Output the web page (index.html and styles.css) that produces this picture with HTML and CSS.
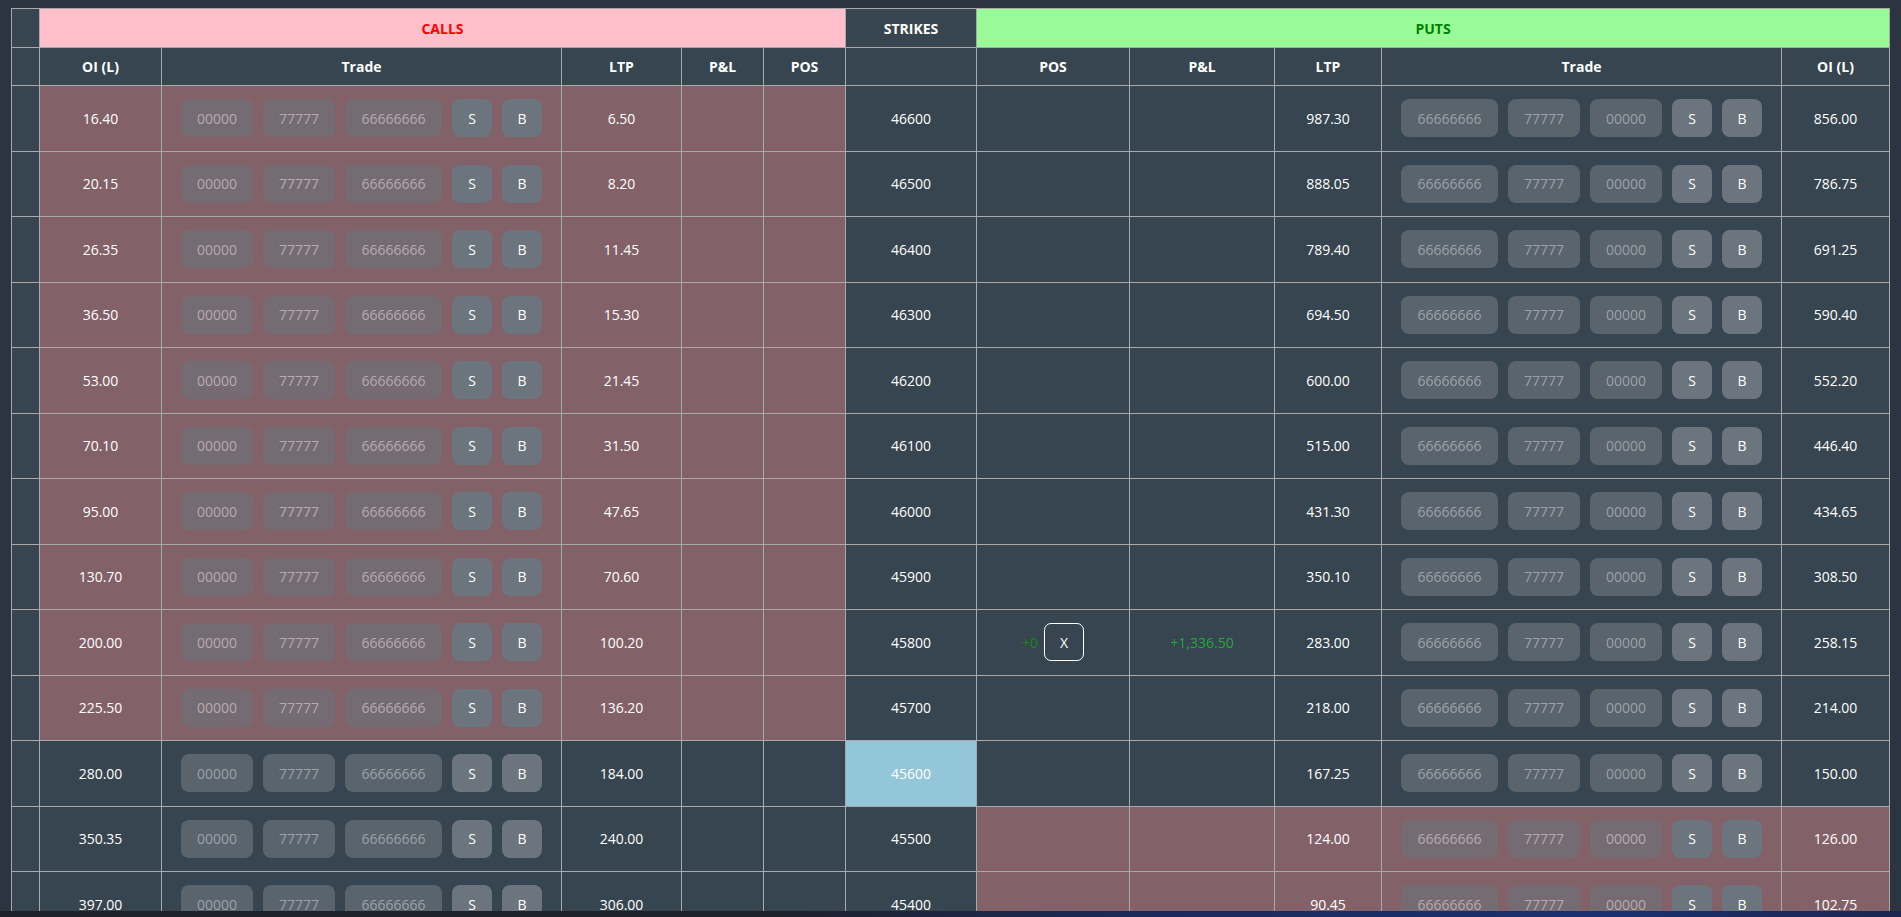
FILE: index.html
```html
<!DOCTYPE html>
<html lang="en">
<head>
<meta charset="utf-8">
<title>Option Chain</title>
<link rel="stylesheet" href="styles.css">
</head>
<body>
<div class="page">
<table class="chain">
<colgroup>
<col class="w-idx"><col class="w-oi"><col class="w-trade"><col class="w-ltp"><col class="w-pl"><col class="w-pos">
<col class="w-strike">
<col class="w-ppos"><col class="w-ppl"><col class="w-pltp"><col class="w-trade"><col class="w-poi">
</colgroup>
<thead>
<tr class="groups">
<th></th>
<th colspan="5" class="calls">CALLS</th>
<th>STRIKES</th>
<th colspan="5" class="puts">PUTS</th>
</tr>
<tr class="cols">
<th></th><th>OI (L)</th><th>Trade</th><th>LTP</th><th>P&amp;L</th><th>POS</th>
<th></th>
<th>POS</th><th>P&amp;L</th><th>LTP</th><th>Trade</th><th>OI (L)</th>
</tr>
</thead>
<tbody>
<tr>
<td></td><td class="itm">16.40</td><td class="itm"><div class="trade"><input placeholder="00000"><input placeholder="77777"><input class="wide" placeholder="66666666"><button>S</button><button>B</button></div></td><td class="itm">6.50</td><td class="itm"></td><td class="itm"></td>
<td>46600</td>
<td></td><td></td><td>987.30</td><td><div class="trade"><input class="wide" placeholder="66666666"><input placeholder="77777"><input placeholder="00000"><button>S</button><button>B</button></div></td><td>856.00</td>
</tr>
<tr>
<td></td><td class="itm">20.15</td><td class="itm"><div class="trade"><input placeholder="00000"><input placeholder="77777"><input class="wide" placeholder="66666666"><button>S</button><button>B</button></div></td><td class="itm">8.20</td><td class="itm"></td><td class="itm"></td>
<td>46500</td>
<td></td><td></td><td>888.05</td><td><div class="trade"><input class="wide" placeholder="66666666"><input placeholder="77777"><input placeholder="00000"><button>S</button><button>B</button></div></td><td>786.75</td>
</tr>
<tr>
<td></td><td class="itm">26.35</td><td class="itm"><div class="trade"><input placeholder="00000"><input placeholder="77777"><input class="wide" placeholder="66666666"><button>S</button><button>B</button></div></td><td class="itm">11.45</td><td class="itm"></td><td class="itm"></td>
<td>46400</td>
<td></td><td></td><td>789.40</td><td><div class="trade"><input class="wide" placeholder="66666666"><input placeholder="77777"><input placeholder="00000"><button>S</button><button>B</button></div></td><td>691.25</td>
</tr>
<tr>
<td></td><td class="itm">36.50</td><td class="itm"><div class="trade"><input placeholder="00000"><input placeholder="77777"><input class="wide" placeholder="66666666"><button>S</button><button>B</button></div></td><td class="itm">15.30</td><td class="itm"></td><td class="itm"></td>
<td>46300</td>
<td></td><td></td><td>694.50</td><td><div class="trade"><input class="wide" placeholder="66666666"><input placeholder="77777"><input placeholder="00000"><button>S</button><button>B</button></div></td><td>590.40</td>
</tr>
<tr>
<td></td><td class="itm">53.00</td><td class="itm"><div class="trade"><input placeholder="00000"><input placeholder="77777"><input class="wide" placeholder="66666666"><button>S</button><button>B</button></div></td><td class="itm">21.45</td><td class="itm"></td><td class="itm"></td>
<td>46200</td>
<td></td><td></td><td>600.00</td><td><div class="trade"><input class="wide" placeholder="66666666"><input placeholder="77777"><input placeholder="00000"><button>S</button><button>B</button></div></td><td>552.20</td>
</tr>
<tr>
<td></td><td class="itm">70.10</td><td class="itm"><div class="trade"><input placeholder="00000"><input placeholder="77777"><input class="wide" placeholder="66666666"><button>S</button><button>B</button></div></td><td class="itm">31.50</td><td class="itm"></td><td class="itm"></td>
<td>46100</td>
<td></td><td></td><td>515.00</td><td><div class="trade"><input class="wide" placeholder="66666666"><input placeholder="77777"><input placeholder="00000"><button>S</button><button>B</button></div></td><td>446.40</td>
</tr>
<tr>
<td></td><td class="itm">95.00</td><td class="itm"><div class="trade"><input placeholder="00000"><input placeholder="77777"><input class="wide" placeholder="66666666"><button>S</button><button>B</button></div></td><td class="itm">47.65</td><td class="itm"></td><td class="itm"></td>
<td>46000</td>
<td></td><td></td><td>431.30</td><td><div class="trade"><input class="wide" placeholder="66666666"><input placeholder="77777"><input placeholder="00000"><button>S</button><button>B</button></div></td><td>434.65</td>
</tr>
<tr>
<td></td><td class="itm">130.70</td><td class="itm"><div class="trade"><input placeholder="00000"><input placeholder="77777"><input class="wide" placeholder="66666666"><button>S</button><button>B</button></div></td><td class="itm">70.60</td><td class="itm"></td><td class="itm"></td>
<td>45900</td>
<td></td><td></td><td>350.10</td><td><div class="trade"><input class="wide" placeholder="66666666"><input placeholder="77777"><input placeholder="00000"><button>S</button><button>B</button></div></td><td>308.50</td>
</tr>
<tr>
<td></td><td class="itm">200.00</td><td class="itm"><div class="trade"><input placeholder="00000"><input placeholder="77777"><input class="wide" placeholder="66666666"><button>S</button><button>B</button></div></td><td class="itm">100.20</td><td class="itm"></td><td class="itm"></td>
<td>45800</td>
<td><div class="pos"><span class="pos-qty">+0</span><button class="close">X</button></div></td><td><span class="profit">+1,336.50</span></td><td>283.00</td><td><div class="trade"><input class="wide" placeholder="66666666"><input placeholder="77777"><input placeholder="00000"><button>S</button><button>B</button></div></td><td>258.15</td>
</tr>
<tr>
<td></td><td class="itm">225.50</td><td class="itm"><div class="trade"><input placeholder="00000"><input placeholder="77777"><input class="wide" placeholder="66666666"><button>S</button><button>B</button></div></td><td class="itm">136.20</td><td class="itm"></td><td class="itm"></td>
<td>45700</td>
<td></td><td></td><td>218.00</td><td><div class="trade"><input class="wide" placeholder="66666666"><input placeholder="77777"><input placeholder="00000"><button>S</button><button>B</button></div></td><td>214.00</td>
</tr>
<tr>
<td></td><td>280.00</td><td><div class="trade"><input placeholder="00000"><input placeholder="77777"><input class="wide" placeholder="66666666"><button>S</button><button>B</button></div></td><td>184.00</td><td></td><td></td>
<td class="atm">45600</td>
<td></td><td></td><td>167.25</td><td><div class="trade"><input class="wide" placeholder="66666666"><input placeholder="77777"><input placeholder="00000"><button>S</button><button>B</button></div></td><td>150.00</td>
</tr>
<tr>
<td></td><td>350.35</td><td><div class="trade"><input placeholder="00000"><input placeholder="77777"><input class="wide" placeholder="66666666"><button>S</button><button>B</button></div></td><td>240.00</td><td></td><td></td>
<td>45500</td>
<td class="itm"></td><td class="itm"></td><td class="itm">124.00</td><td class="itm"><div class="trade"><input class="wide" placeholder="66666666"><input placeholder="77777"><input placeholder="00000"><button>S</button><button>B</button></div></td><td class="itm">126.00</td>
</tr>
<tr>
<td></td><td>397.00</td><td><div class="trade"><input placeholder="00000"><input placeholder="77777"><input class="wide" placeholder="66666666"><button>S</button><button>B</button></div></td><td>306.00</td><td></td><td></td>
<td>45400</td>
<td class="itm"></td><td class="itm"></td><td class="itm">90.45</td><td class="itm"><div class="trade"><input class="wide" placeholder="66666666"><input placeholder="77777"><input placeholder="00000"><button>S</button><button>B</button></div></td><td class="itm">102.75</td>
</tr>
</tbody>
</table>
</div>
<div class="taskbar"></div>
</body>
</html>
```

FILE: styles.css
```css
html, body {
  margin: 0;
  background: #2b3440;
}
body {
  font-family: "Open Sans", "Noto Sans", sans-serif;
  font-size: 14px;
  color: #ffffff;
  overflow: hidden;
}
.page {
  padding: 8px 11px 0;
}
.chain {
  border-collapse: collapse;
  table-layout: fixed;
  width: 1879px;
}
.w-idx { width: 28px; }
.w-oi { width: 122px; }
.w-trade { width: 400px; }
.w-ltp { width: 120px; }
.w-pl { width: 82px; }
.w-pos { width: 82px; }
.w-strike { width: 131px; }
.w-ppos { width: 153px; }
.w-ppl { width: 145px; }
.w-pltp { width: 107px; }
.w-poi { width: 108px; }

.chain th,
.chain td {
  border: 1px solid #a9a9a9;
  background: #36454f;
  text-align: center;
  vertical-align: middle;
  padding: 0 2px;
}
.chain th {
  font-weight: bold;
  font-size: 14px;
}
.groups th {
  height: 38px;
}
.cols th {
  height: 37px;
}
.chain .calls {
  background: #ffc0cb;
  color: #ff0000;
}
.chain .puts {
  background: #98fb98;
  color: #008000;
}
.chain tbody td {
  padding-top: 13.25px;
  padding-bottom: 13.25px;
  height: 38px;
}
.chain td.itm {
  background: #836169;
}
.chain td.atm {
  background: #92c6d8;
}

.trade {
  display: flex;
  justify-content: center;
  gap: 10px;
}
.trade input {
  width: 72px;
  height: 38px;
  box-sizing: border-box;
  border: none;
  border-radius: 8px;
  background: #5a646d;
  color: #ffffff;
  font-family: inherit;
  font-size: 14px;
  text-align: center;
  padding: 0;
  outline: none;
}
.trade input.wide {
  width: 97px;
}
.trade input::placeholder {
  color: #9aa1a8;
}
.itm .trade input {
  background: #756c73;
}
.itm .trade input::placeholder {
  color: #b7a9ae;
}
.trade button {
  width: 40px;
  height: 38px;
  border: none;
  border-radius: 8px;
  background: #6c757d;
  color: #ffffff;
  font-family: inherit;
  font-size: 14px;
  padding: 0;
}

.pos {
  display: flex;
  justify-content: center;
  align-items: center;
  gap: 6px;
}
.pos-qty {
  color: #138a17;
}
.close {
  width: 40px;
  height: 38px;
  box-sizing: border-box;
  border: 1px solid #ffffff;
  border-radius: 7px;
  background: transparent;
  color: #ffffff;
  font-family: inherit;
  font-size: 14px;
  padding: 0;
}
.profit {
  color: #22a83a;
}

.taskbar {
  position: fixed;
  left: 0;
  right: 0;
  bottom: 0;
  height: 6px;
  background: linear-gradient(90deg, #1d2129 0%, #1d2129 40%, #1b2a5e 62%, #1a306f 85%, #1c2550 100%);
}
```
